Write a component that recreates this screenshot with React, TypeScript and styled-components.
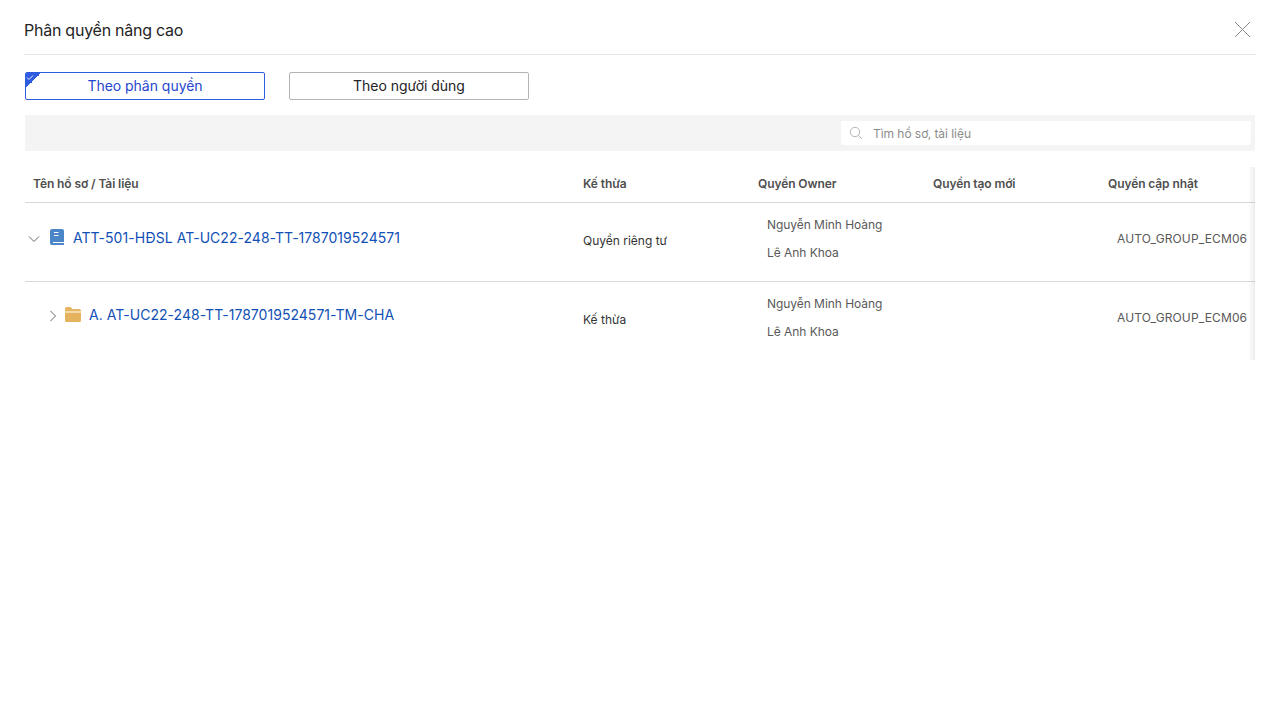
import React from "react";
import styled, { createGlobalStyle } from "styled-components";

type Row = {
  name: string;
  kind: "book" | "folder";
  inherit: string;
  owners: string[];
  updater: string;
};

const columns = ["Tên hồ sơ / Tài liệu", "Kế thừa", "Quyền Owner", "Quyền tạo mới", "Quyền cập nhật"];

const rows: Row[] = [
  {
    name: "ATT-501-HĐSL AT-UC22-248-TT-1787019524571",
    kind: "book",
    inherit: "Quyền riêng tư",
    owners: ["Nguyễn Minh Hoàng", "Lê Anh Khoa"],
    updater: "AUTO_GROUP_ECM06",
  },
  {
    name: "A. AT-UC22-248-TT-1787019524571-TM-CHA",
    kind: "folder",
    inherit: "Kế thừa",
    owners: ["Nguyễn Minh Hoàng", "Lê Anh Khoa"],
    updater: "AUTO_GROUP_ECM06",
  },
];

function BookIcon() {
  return (
    <svg width="14" height="16" viewBox="0 0 14 16">
      <path d="M2 0h10a2 2 0 0 1 2 2v14H2a2 2 0 0 1-2-2V2a2 2 0 0 1 2-2z" fill="#4a86c8" />
      <path d="M4 3.500h4.500M4 6.500h4.500M3 13.500h11" stroke="#fff" strokeWidth="1.200" fill="none" />
    </svg>
  );
}

function FolderIcon() {
  return (
    <svg width="16" height="15" viewBox="0 0 16 15">
      <path d="M0 1.500A1.500 1.500 0 0 1 1.500 0h4l2 2h7A1.500 1.500 0 0 1 16 3.500V4.500H0z" fill="#e8b560" />
      <path d="M0 5.500h16v8a1.500 1.500 0 0 1-1.500 1.500h-13A1.500 1.500 0 0 1 0 13.500z" fill="#e5b25d" />
    </svg>
  );
}

function SearchIcon() {
  return (
    <svg width="14" height="14" viewBox="0 0 14 14" fill="none" stroke="#b5b5b5" strokeWidth="1">
      <circle cx="6" cy="6" r="4.700" />
      <path d="M9.500 9.500l3.500 3.500" />
    </svg>
  );
}

function ChevronIcon({ open }: { open: boolean }) {
  return open ? (
    <svg width="12" height="12" viewBox="0 0 12 12" fill="none" stroke="#666" strokeWidth="1">
      <path d="M1 3.500l5 5 5-5" />
    </svg>
  ) : (
    <svg width="12" height="12" viewBox="0 0 12 12" fill="none" stroke="#666" strokeWidth="1">
      <path d="M3.500 1l5 5-5 5" />
    </svg>
  );
}

export default function App() {
  return (
    <Page>
      <GlobalStyle />
      <Header>
        <Title>Phân quyền nâng cao</Title>
        <CloseIcon width="17" height="17" viewBox="0 0 17 17">
          <path d="M1 1l15 15M16 1L1 16" stroke="#8a8a8a" strokeWidth="1" fill="none" />
        </CloseIcon>
      </Header>
      <Body>
        <Tabs>
          <Tab $active>
            <Corner>
              <svg width="10" height="8" viewBox="0 0 10 8" fill="none" stroke="#fff" strokeWidth="0.900">
                <path d="M1 4.500l2 2 4-4" />
              </svg>
            </Corner>
            Theo phân quyền
          </Tab>
          <Tab>Theo người dùng</Tab>
        </Tabs>
        <Toolbar>
          <SearchBox>
            <SearchIcon />
            <SearchInput placeholder="Tìm hồ sơ, tài liệu" readOnly />
          </SearchBox>
        </Toolbar>
        <TableWrap>
          <HeadRow>
            {columns.map((c) => (
              <HeadCell key={c}>{c}</HeadCell>
            ))}
          </HeadRow>
          {rows.map((r) => {
            const nested = r.kind === "folder";
            return (
              <DataRow key={r.name}>
                <NameCell $nested={nested}>
                  <Toggle $nested={nested}>
                    <ChevronIcon open={!nested} />
                  </Toggle>
                  <NodeIcon $nested={nested}>{nested ? <FolderIcon /> : <BookIcon />}</NodeIcon>
                  <NodeName>{r.name}</NodeName>
                </NameCell>
                <InheritCell>{r.inherit}</InheritCell>
                <OwnerCell>
                  {r.owners.map((o) => (
                    <OwnerName key={o}>{o}</OwnerName>
                  ))}
                </OwnerCell>
                <div />
                <UpdaterCell>{r.updater}</UpdaterCell>
              </DataRow>
            );
          })}
        </TableWrap>
      </Body>
    </Page>
  );
}

const GlobalStyle = createGlobalStyle`
  html, body {
    margin: 0;
    padding: 0;
    background: #fff;
    font-family: Inter, "Noto Sans", sans-serif;
  }
`;

const Page = styled.div`
  width: 1280px;
  height: 720px;
  box-sizing: border-box;
  padding: 0 24px;
  overflow: hidden;
  background: #fff;
`;

const Header = styled.div`
  display: flex;
  justify-content: space-between;
  align-items: center;
  height: 55px;
  box-sizing: border-box;
  padding-top: 5px;
  border-bottom: 1px solid #e2e6ea;
`;

const Title = styled.div`
  font-size: 16px;
  letter-spacing: -0.25px;
  color: #242424;
`;

const CloseIcon = styled.svg`
  margin-right: 5px;
`;

const Body = styled.div`
  padding: 17px 1px 0;
`;

const Tabs = styled.div`
  display: flex;
  gap: 24px;
`;

const Tab = styled.div<{ $active?: boolean }>`
  position: relative;
  width: 240px;
  height: 28px;
  box-sizing: border-box;
  display: flex;
  align-items: center;
  justify-content: center;
  padding-bottom: 2px;
  font-size: 14px;
  letter-spacing: -0.03px;
  border-radius: 2px;
  overflow: hidden;
  color: ${({ $active }) => ($active ? "#2546cf" : "#242424")};
  border: 1px solid ${({ $active }) => ($active ? "#2f5be0" : "#b4b4b4")};
`;

const Corner = styled.div`
  position: absolute;
  top: 0;
  left: 0;
  width: 15px;
  height: 15px;
  background: linear-gradient(135deg, #2f5be0 50%, transparent 50%);

  svg {
    position: absolute;
    top: 0;
    left: 0;
  }
`;

const Toolbar = styled.div`
  display: flex;
  justify-content: flex-end;
  align-items: center;
  height: 36px;
  margin-top: 15px;
  padding-right: 4px;
  background: #f4f4f4;
`;

const SearchBox = styled.div`
  display: flex;
  align-items: center;
  gap: 10px;
  width: 410px;
  height: 24px;
  box-sizing: border-box;
  padding-left: 8px;
  background: #fff;
  border-radius: 2px;
`;

const SearchInput = styled.input`
  flex: 1;
  border: none;
  outline: none;
  padding: 0;
  background: transparent;
  font-family: inherit;
  font-size: 12px;
  letter-spacing: -0.05px;

  &::placeholder {
    color: #8c8c8c;
    opacity: 1;
  }
`;

const TableWrap = styled.div`
  position: relative;
  margin-top: 16px;
  height: 193px;
  overflow: hidden;

  &::after {
    content: "";
    position: absolute;
    top: 0;
    right: 0;
    bottom: 0;
    width: 7px;
    background: linear-gradient(to right, rgba(0, 0, 0, 0), rgba(0, 0, 0, 0.07));
  }
`;

const gridColumns = "550px 175px 175px 175px 175px";

const HeadRow = styled.div`
  display: grid;
  grid-template-columns: ${gridColumns};
  height: 36px;
  box-sizing: border-box;
  padding-bottom: 2px;
  border-bottom: 1px solid #d9d9d9;
`;

const HeadCell = styled.div`
  display: flex;
  align-items: center;
  padding: 0 8px;
  font-size: 12px;
  font-weight: 600;
  letter-spacing: -0.1px;
  color: #4f4f4f;
`;

const DataRow = styled.div`
  display: grid;
  grid-template-columns: ${gridColumns};
  height: 79px;
  box-sizing: border-box;
  border-bottom: 1px solid #d9d9d9;

  &:last-child {
    border-bottom: none;
  }
`;

const NameCell = styled.div<{ $nested?: boolean }>`
  display: flex;
  align-items: center;
  height: ${({ $nested }) => ($nested ? "64px" : "68px")};
  padding-left: ${({ $nested }) => ($nested ? "22px" : "3px")};
`;

const Toggle = styled.span<{ $nested?: boolean }>`
  display: flex;
  margin-top: 4px;
  margin-right: ${({ $nested }) => ($nested ? "6px" : "10px")};
`;

const NodeIcon = styled.span<{ $nested?: boolean }>`
  display: flex;
  margin-right: ${({ $nested }) => ($nested ? "8px" : "9px")};
`;

const NodeName = styled.span`
  font-size: 14px;
  letter-spacing: 0.03px;
  color: #1250b5;
`;

const InheritCell = styled.div`
  display: flex;
  align-items: center;
  height: 74px;
  padding-left: 8px;
  font-size: 12px;
  color: #333;
`;

const OwnerCell = styled.div`
  display: flex;
  flex-direction: column;
  gap: 10px;
  padding: 13px 0 0 17px;
`;

const OwnerName = styled.div`
  font-size: 12px;
  line-height: 18px;
  letter-spacing: -0.05px;
  color: #595959;
`;

const UpdaterCell = styled.div`
  display: flex;
  align-items: center;
  height: 71px;
  padding-left: 17px;
  font-size: 12px;
  letter-spacing: 0.12px;
  color: #595959;
`;
